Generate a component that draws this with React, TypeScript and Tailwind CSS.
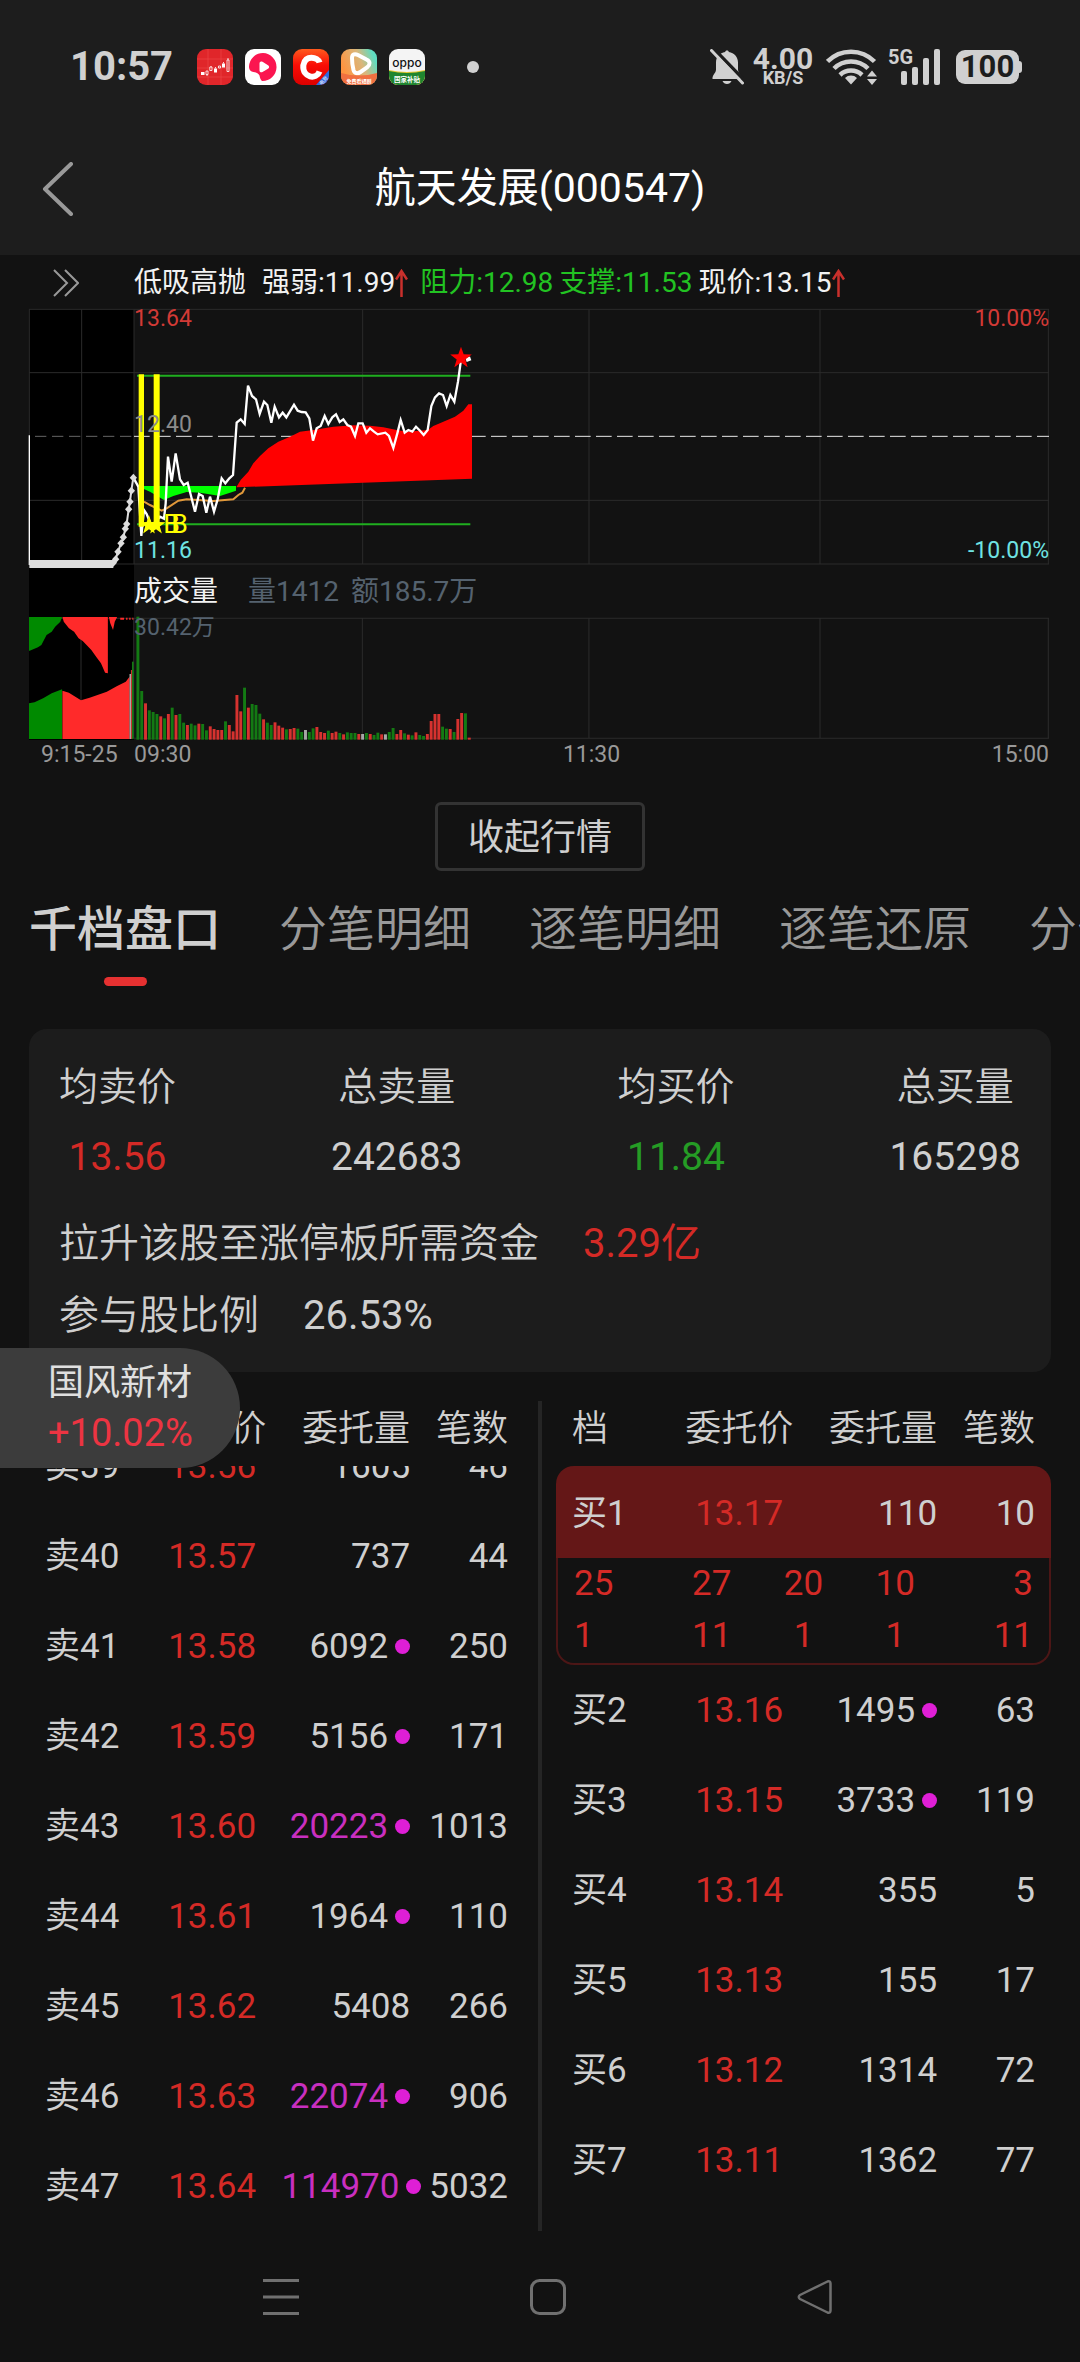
import { useState } from "react";

type Order = { level: string; price: string; volume: string; count: string; dot?: boolean; big?: boolean };

const SELLS: Order[] = [
  { level: "卖39", price: "13.56", volume: "1605", count: "46" },
  { level: "卖40", price: "13.57", volume: "737", count: "44" },
  { level: "卖41", price: "13.58", volume: "6092", count: "250", dot: true },
  { level: "卖42", price: "13.59", volume: "5156", count: "171", dot: true },
  { level: "卖43", price: "13.60", volume: "20223", count: "1013", dot: true, big: true },
  { level: "卖44", price: "13.61", volume: "1964", count: "110", dot: true },
  { level: "卖45", price: "13.62", volume: "5408", count: "266" },
  { level: "卖46", price: "13.63", volume: "22074", count: "906", dot: true, big: true },
  { level: "卖47", price: "13.64", volume: "114970", count: "5032", dot: true, big: true },
];

const BUYS: Order[] = [
  { level: "买2", price: "13.16", volume: "1495", count: "63", dot: true },
  { level: "买3", price: "13.15", volume: "3733", count: "119", dot: true },
  { level: "买4", price: "13.14", volume: "355", count: "5" },
  { level: "买5", price: "13.13", volume: "155", count: "17" },
  { level: "买6", price: "13.12", volume: "1314", count: "72" },
  { level: "买7", price: "13.11", volume: "1362", count: "77" },
];

const BUY_ONE: Order = { level: "买1", price: "13.17", volume: "110", count: "10" };
const BUY_ONE_QUEUE = ["25", "27", "20", "10", "3", "1", "11", "1", "1", "11"];

const TABS = ["千档盘口", "分笔明细", "逐笔明细", "逐笔还原", "分价表"];

const STATS = [
  { label: "均卖价", value: "13.56", color: "text-[#d42a26]" },
  { label: "总卖量", value: "242683", color: "text-[#cfcfcf]" },
  { label: "均买价", value: "11.84", color: "text-[#259c25]" },
  { label: "总买量", value: "165298", color: "text-[#cfcfcf]" },
];

const PRICE_LINE =
  "400,683 415,710 424,858 432,780 440,792 455,830 480,800 492,806 497,760 504,620 515,695 527,610 540,688 551,705 563,698 585,785 597,732 608,738 619,788 630,740 642,785 653,748 665,685 676,700 688,685 699,675 710,518 722,508 734,522 744,407 756,438 768,448 779,492 792,455 802,465 814,518 824,470 837,502 848,488 859,502 882,464 893,482 905,486 917,487 928,505 939,572 950,535 962,528 974,498 985,522 997,502 1008,493 1019,516 1030,508 1042,525 1053,530 1065,558 1075,520 1088,520 1099,548 1110,535 1122,545 1133,553 1156,548 1167,558 1180,594 1192,550 1202,510 1214,548 1225,540 1237,545 1248,530 1260,542 1271,555 1283,540 1294,468 1305,442 1317,430 1329,435 1340,468 1351,435 1363,455 1374,395 1384,322";

const AUCTION = [
  [340, 938], [347, 928], [354, 905], [363, 880], [370, 862], [376, 836], [380, 822], [386, 778], [390, 755], [394, 722], [400, 683],
];

// minute volume bars: colour letter (g/r/w) + top of the bar
const VOLUME =
  "g140 g363 r400 g421 g426 g432 r439 g445 r432 g413 r435 g432 g458 r465 g461 g466 r461 g462 g481 r469 r477 r480 r480 g454 r465 r484 r375 r424 g353 r413 g402 g405 g431 r448 g458 g465 r457 r467 r473 g478 r477 r474 g476 g486 w480 g486 g475 r471 r486 r489 g482 r489 r485 g489 r493 g487 g489 g489 r492 w492 g489 r492 g495 g488 r493 w493 g486 g474 r492 r480 g490 r494 g496 r487 g495 g498 r492 r453 r432 r432 g470 g476 r477 g486 r447 r429 g430 r503".split(" ");

const BAR_COLORS: Record<string, string> = { g: "#137a13", r: "#d6322f", w: "#a8a8a8" };

function starPoints(cx: number, cy: number, r: number) {
  return Array.from({ length: 10 }, (_, i) => {
    const rad = i % 2 ? r * 0.4 : r;
    const a = (Math.PI / 5) * i - Math.PI / 2;
    return `${cx + rad * Math.cos(a)},${cy + rad * Math.sin(a)}`;
  }).join(" ");
}

function AppIcons() {
  return (
    <div className="flex gap-3">
      <svg width="36" height="36" viewBox="0 0 36 36">
        <rect width="36" height="36" rx="9" fill="#e0262a" />
        <path d="M0 10H36M0 19H36M0 28H36M11 0V36M24 0V36" stroke="#ee4a4a" strokeWidth="0.6" />
        <path d="M4 23h3.500v3h-3.500zM17 19.500h3v4h-3zM25 14.500h3v4h-3z" fill="#fff" />
        <path d="M9 22h2v3.500h-2zM10 25.500v1.500M12.800 18h2.200v3.500h-2.200zM14 17v1M21.500 17h2v2h-2zM30 11h2v11.500h-2zM31 9v2M18.500 18v1.500M26.500 13v1.500" fill="none" stroke="#fff" strokeWidth="0.8" />
      </svg>
      <svg width="36" height="36" viewBox="0 0 36 36">
        <rect width="36" height="36" rx="9" fill="#fff" />
        <path d="M18 4a14 14 0 1 1-1 28c-1.500-1-2-3-2.500-5.500-1-2-3-3-6-3.500-2.500-.5-4.500-2-4.500-5.500A14 14 0 0 1 18 4z" fill="#fb1550" />
        <path d="M14.500 14.500c0-2 1.500-2.500 3-1.700l5.500 3.500c1.500 1 1.500 2.500 0 3.400l-5.500 3.300c-1.500.8-3 .2-3-1.500z" fill="#fff" />
      </svg>
      <svg width="36" height="36" viewBox="0 0 36 36">
        <defs>
          <linearGradient id="c-red" x1="0" y1="0" x2="0" y2="1">
            <stop offset="0" stopColor="#ff5a1e" />
            <stop offset="0.45" stopColor="#f90d05" />
            <stop offset="1" stopColor="#dc0000" />
          </linearGradient>
          <clipPath id="c-clip"><rect width="36" height="36" rx="9" /></clipPath>
        </defs>
        <g clipPath="url(#c-clip)">
          <rect width="36" height="36" fill="url(#c-red)" />
          <path d="M26.500 13.500C25 8 12 5 10.300 16.500 9.500 29 23.500 31 26.500 22.500" fill="none" stroke="#fff" strokeWidth="6" />
          <path d="M36 21V36H23z" fill="#2d6be0" />
          <text x="26" y="35" fontSize="5" fill="#fff" transform="rotate(-48 29 33)">电竞</text>
        </g>
      </svg>
      <svg width="36" height="36" viewBox="0 0 36 36">
        <defs>
          <linearGradient id="v-bg" x1="0" y1="0.4" x2="1" y2="0">
            <stop offset="0" stopColor="#ff9440" />
            <stop offset="0.5" stopColor="#d9b77c" />
            <stop offset="0.85" stopColor="#5fdcc0" />
          </linearGradient>
          <clipPath id="v-clip"><rect width="36" height="36" rx="9" /></clipPath>
        </defs>
        <g clipPath="url(#v-clip)">
          <rect width="36" height="36" fill="url(#v-bg)" />
          <path d="M11 9c0-4 3-4.500 6-3l8.500 4.500c4 2 4 5 .5 8l-6.500 4.500c-3 2-6 1.500-7-2-1-4-1.500-8-1.500-12z" fill="none" stroke="#fff" strokeWidth="4" />
          <path d="M0 24q18 5 36 0V36H0z" fill="#f07040" />
          <text x="18" y="34" fontSize="5" fontWeight="700" textAnchor="middle" fill="#fff">免费看短剧</text>
        </g>
      </svg>
      <svg width="36" height="36" viewBox="0 0 36 36">
        <clipPath id="o-clip"><rect width="36" height="36" rx="9" /></clipPath>
        <g clipPath="url(#o-clip)">
          <rect width="36" height="36" fill="#f4f4f4" />
          <path d="M0 21q18 4 36 0V36H0z" fill="#e8c832" />
          <path d="M0 22q18 4 36 0V36H0z" fill="#20852f" />
          <text x="18" y="18" fontSize="12" fontFamily="Inter" fontWeight="500" textAnchor="middle" fill="#111">oppo</text>
          <text x="18" y="32.500" fontSize="6.500" fontWeight="700" textAnchor="middle" fill="#fff">国家补贴</text>
        </g>
      </svg>
    </div>
  );
}

function StatusBar() {
  return (
    <div className="flex h-[122px] items-center justify-between pt-3 pl-[70px] pr-[58px] text-[#d0d0d0]">
      <div className="flex items-center gap-6">
        <span className="text-[40px] font-bold leading-none">10:57</span>
        <AppIcons />
        <span className="ml-[18px] h-3 w-3 rounded-full bg-[#d0d0d0]" />
      </div>
      <div className="flex items-center">
        <svg width="34" height="36" viewBox="0 0 34 36" fill="#d0d0d0">
          <path d="M17 1.500c1.200 0 1.800.6 1.800 1.600 5.500 1 9.200 5 9.200 10.400v7.500c0 2.500 3.500 5 3.500 7.500v1.500H2.500V28.500C2.500 26 6 23.500 6 21V13.500C6 8 9.700 4 15.200 3.100c0-1 .6-1.600 1.800-1.600zM12.500 32h9c-.8 2-2.500 3-4.500 3s-3.700-1-4.500-3z" />
          <path d="M3 -1L35 32" stroke="#1d1d1d" strokeWidth="3.500" />
          <path d="M1.500 1.500L32.500 34" stroke="#d0d0d0" strokeWidth="3" strokeLinecap="round" />
        </svg>
        <div className="ml-2 flex w-[62px] flex-col items-center font-bold">
          <span className="text-[30px] leading-[22px]">4.00</span>
          <span className="text-[18px] leading-[16px]">KB/S</span>
        </div>
        <svg className="ml-3" width="52" height="36" viewBox="0 0 52 36" fill="none" stroke="#d0d0d0" strokeWidth="4.500">
          <path d="M1.500 12.500a33 33 0 0 1 47 0M8 19.500a24 24 0 0 1 34 0M14 26a16 16 0 0 1 22 0" />
          <path d="M25 35.500l-6-6.500a8.500 8.500 0 0 1 12 0zM46 21.500l5 6H41zM46 36l-5-6H51z" fill="#d0d0d0" stroke="none" />
        </svg>
        <div className="relative ml-[14px]">
          <svg width="48" height="36" viewBox="0 0 48 36" fill="#d0d0d0">
            <rect x="9" y="22" width="6" height="14" rx="2" />
            <rect x="20" y="18" width="6" height="18" rx="2" />
            <rect x="31" y="9" width="6" height="27" rx="2" />
            <rect x="42" y="0" width="6" height="36" rx="2" />
          </svg>
          <span className="absolute -left-1 -top-px text-[20px] font-bold leading-[18px]">5G</span>
        </div>
        <div className="ml-4 flex items-center">
          <span className="flex h-[34px] w-[63px] items-center justify-center rounded-[9px] bg-[#d0d0d0] text-[31px] font-bold text-[#1d1d1d]">100</span>
          <span className="h-3 w-[3px] rounded-r-full bg-[#d0d0d0]" />
        </div>
      </div>
    </div>
  );
}

function UpArrow() {
  return (
    <svg className="inline-block" width="13" height="28" viewBox="0 0 13 28" fill="none" stroke="#c9302c" strokeWidth="2.500">
      <path d="M6.500 28V2M1 10.500L6.500 2L12 10.500" />
    </svg>
  );
}

function PriceChart() {
  return (
    <div className="relative">
      <svg className="block h-[256px] w-full overflow-visible" viewBox="87 177 3060 768" preserveAspectRatio="none">
        <rect x="87" y="177" width="315" height="768" fill="#000" />
        <path d="M87 178H3147M87 368H3147M87 751H3147M87 942H3147M245 178V942M402 178V942M1088 178V942M1767 178V942M2460 178V942M3145 178V942M88 178V942" stroke="#2b2b2b" strokeWidth="3" />
        <path d="M105 559H402" stroke="#666" strokeWidth="3" strokeDasharray="34 17" />
        <path d="M402 559H3147" stroke="#e8e8e8" strokeWidth="3" strokeDasharray="47 16" />
        <path d="M411 377H1411M411 823H1411" stroke="#1fae1f" strokeWidth="6" />
        <path d="M432 755L450 765L485 782L500 775L535 752L560 748L640 753L700 748L715 735L727 728L735 713" fill="none" stroke="#e0983a" strokeWidth="6" />
        <path d="M430 708H708V722L690 728L660 738L600 728L560 726L520 738L492 750L450 725L430 716Z" fill="#00ff00" />
        <path d="M709 712L722 690L745 665L760 640L780 618L805 595L835 575L870 560L900 545L940 540L1000 530L1060 526L1110 527L1150 532L1190 540L1220 545L1283 540L1300 528L1330 515L1365 500L1390 482L1405 463H1416V686Z" fill="#ff0000" />
        <polyline points={PRICE_LINE} fill="none" stroke="#fff" strokeWidth="7" />
        <path d="M1398 330L1412 325" stroke="#fff" strokeWidth="12" />
        <path d="M88 556V945" stroke="#fff" strokeWidth="4" />
        <path d="M88 942H340" stroke="#ddd" strokeWidth="24" />
        <polyline points={AUCTION.map((p) => p.join(",")).join(" ")} fill="none" stroke="#ddd" strokeWidth="6" />
        {AUCTION.map(([x, y]) => (
          <path key={y} d={`M${x - 11} ${y}L${x} ${y - 12}L${x + 11} ${y}L${x} ${y + 12}Z`} fill="#ddd" />
        ))}
        <path d="M416 373H432V830H416ZM461 373H479V830H461Z" fill="#ffff00" />
        <polygon points={starPoints(447, 826, 30)} fill="#ffff00" />
        <polygon points={starPoints(468, 826, 30)} fill="#ffff00" />
        <text x="490" y="850" fontSize="80" fill="#ffff00">B</text>
        <text x="514" y="850" fontSize="80" fill="#ffff00">B</text>
        <polygon points={starPoints(1383, 324, 34)} fill="#ff0000" />
      </svg>
      <div className="absolute inset-y-0 left-[10.3%] right-0 flex flex-col justify-between text-[23px] leading-5">
        <div className="flex justify-between text-[#d23a36]">
          <span>13.64</span>
          <span>10.00%</span>
        </div>
        <span className="mb-5 text-[#8c8c8c]">12.40</span>
        <div className="mb-1 flex justify-between text-[#6fe3e3]">
          <span>11.16</span>
          <span>-10.00%</span>
        </div>
      </div>
    </div>
  );
}

function VolumeChart() {
  return (
    <div className="relative">
      <svg className="block h-[122px] w-full overflow-visible" viewBox="84 144 2962 366" preserveAspectRatio="none">
        <rect x="84" y="144" width="305" height="366" fill="#000" />
        <path d="M84 145H3046M389 505H3046M235 145V505M388 145V505M1052 145V505M1710 145V505M2381 145V505M3044 145V505" stroke="#2b2b2b" strokeWidth="3" />
        <path d="M84 141H180L175 155L160 170L150 185L135 195L120 225L110 232L86 242H84ZM84 400L100 397L125 385L150 370L180 358V507H84Z" fill="#008a00" />
        <path d="M181 141H313V310L305 308L293 280L280 262L265 240L240 213L228 205L215 185L200 175L185 155ZM316 141H340L333 155L328 180L320 160ZM349 143H360V149H349ZM366 143H370V149H366ZM375 143H379V149H375ZM384 143H387V149H384Z" fill="#ff2a2a" />
        <path d="M181 362L200 368L215 378L235 391L260 383L310 365L340 348L365 335L376 320V507H181Z" fill="#ff2a2a" />
        <path d="M376 312H380V507H376Z" fill="#bbb" />
        <path d="M380 300H383V507H380Z" fill="#d6322f" />
        <path d="M383 275H388V507H383Z" fill="#137a13" />
        {VOLUME.map((v, i) => {
          const top = Number(v.slice(1));
          return <rect key={i} x={396 + i * 11.06} y={top} width="8.500" height={509 - top} fill={BAR_COLORS[v[0]]} />;
        })}
      </svg>
      <span className="absolute left-[10.3%] top-0 text-[23px] leading-5 text-[#55626f]">30.42万</span>
    </div>
  );
}

function Quote() {
  return (
    <section className="pl-[29px] pr-[31px]">
      <div className="flex h-[54px] items-center whitespace-nowrap pt-0.5 text-[28px] text-[#f2f2f2]">
        <div className="w-[10.3%] shrink-0 pl-6">
          <svg width="26" height="28" viewBox="0 0 26 28" fill="none" stroke="#999" strokeWidth="2">
            <path d="M1 1L14 14L1 27M12 1L25 14L12 27" />
          </svg>
        </div>
        <span className="mr-4">低吸高抛</span>
        <span className="mr-3 flex items-center">强弱:11.99<UpArrow /></span>
        <span className="mr-1.5 text-[#22c322]">阻力:12.98</span>
        <span className="mr-1.5 text-[#22c322]">支撑:11.53</span>
        <span className="flex items-center">现价:13.15<UpArrow /></span>
      </div>
      <PriceChart />
      <div className="flex h-[53px] items-center text-[28px] text-[#55626f]">
        <div className="h-full w-[10.3%] bg-black" />
        <span className="mr-[30px] text-[#f2f2f2]">成交量</span>
        <span className="mr-3">量1412</span>
        <span>额185.7万</span>
      </div>
      <VolumeChart />
      <div className="flex h-7 items-center pt-0.5 text-[23px] text-[#999]">
        <span className="w-[10.3%] whitespace-nowrap pl-3">9:15-25</span>
        <div className="grid flex-1 grid-cols-3">
          <span>09:30</span>
          <span className="text-center">11:30</span>
          <span className="text-right">15:00</span>
        </div>
      </div>
    </section>
  );
}

function HeadRow() {
  return (
    <tr className="h-[65px] text-[36px] leading-none">
      <th className="w-[23%] pb-2.5 pl-4 text-left font-[350]">档</th>
      <th className="w-[28%] pb-2.5 font-[350]">委托价</th>
      <th className="w-[26%] whitespace-nowrap pb-2.5 text-right font-[350]">委托量</th>
      <th className="w-[23%] pb-2.5 pr-4 text-right font-[350]">笔数</th>
    </tr>
  );
}

function OrderCells({ order, first, last }: { order: Order; first?: string; last?: string }) {
  return (
    <>
      <td className={`w-[23%] pl-4 ${first ?? ""}`}>{order.level}</td>
      <td className="w-[28%] text-center text-[#d42a26]">{order.price}</td>
      <td className="w-[26%]">
        <div className={`flex items-center justify-end-safe ${order.big ? "text-[#c92fc0]" : ""}`}>
          {order.volume}
          {order.dot && <span className="ml-[7px] h-[15px] w-[15px] shrink-0 rounded-full bg-[#df1fd6]" />}
        </div>
      </td>
      <td className={`w-[23%] pr-4 text-right ${last ?? ""}`}>{order.count}</td>
    </>
  );
}

function SellBook() {
  return (
    <div className="min-w-0 flex-1">
      <table className="w-full table-fixed border-separate border-spacing-0">
        <thead><HeadRow /></thead>
      </table>
      {/* list is scrolled half a row */}
      <div className="overflow-hidden">
        <table className="-mt-[45px] w-full table-fixed border-separate border-spacing-0 text-[35px] leading-none">
          <tbody>
            {SELLS.map((o) => (
              <tr key={o.level} className="h-[90px]"><OrderCells order={o} /></tr>
            ))}
          </tbody>
        </table>
      </div>
    </div>
  );
}

function BuyBook() {
  return (
    <div className="min-w-0 flex-1">
      <table className="w-full table-fixed border-separate border-spacing-0 text-[35px] leading-none">
        <thead><HeadRow /></thead>
        <tbody>
          <tr className="h-[92px] [&>td]:bg-[#641717] [&>td]:pt-0.5">
            <OrderCells order={BUY_ONE} first="rounded-tl-[18px]" last="rounded-tr-[18px]" />
          </tr>
          <tr>
            <td colSpan={4} className="rounded-b-[18px] border-x-2 border-b-2 border-[#4c1616] px-4 pb-px">
              <div className="grid grid-cols-5 text-center leading-[52px] text-[#d42a26]">
                {BUY_ONE_QUEUE.map((n, i) => (
                  <span key={i} className={i % 5 === 0 ? "text-left" : i % 5 === 4 ? "text-right" : ""}>{n}</span>
                ))}
              </div>
            </td>
          </tr>
          {BUYS.map((o) => (
            <tr key={o.level} className="h-[90px]"><OrderCells order={o} /></tr>
          ))}
        </tbody>
      </table>
    </div>
  );
}

export default function App() {
  const [tab, setTab] = useState(0);

  return (
    <div className="relative min-h-screen overflow-hidden bg-[#121212] font-[Roboto,'Noto_Sans_CJK_SC',sans-serif] text-[#cfcfcf]">
      <header className="bg-[#1d1d1d]">
        <StatusBar />
        <div className="grid h-[133px] grid-cols-[1fr_auto_1fr] items-center">
          <button aria-label="返回" className="pl-[42px]">
            <svg width="32" height="54" viewBox="0 0 32 54" fill="none" stroke="#999" strokeWidth="4" strokeLinecap="round" strokeLinejoin="round">
              <path d="M29 2L3 27L29 52" />
            </svg>
          </button>
          <h1 className="text-[41px] text-white">航天发展(000547)</h1>
        </div>
      </header>

      <Quote />

      <div className="mt-[34px] flex justify-center">
        <button className="h-[69px] w-[210px] rounded-md border-[3px] border-[#333] pt-0.5 text-[36px] leading-none">收起行情</button>
      </div>

      <nav className="mt-[27px] flex gap-[58px] overflow-hidden whitespace-nowrap pl-[29px]">
        {TABS.map((t, i) => (
          <button key={t} onClick={() => setTab(i)} className="flex shrink-0 flex-col items-center">
            <span className={`text-[48px] leading-[64px] ${tab === i ? "font-medium" : "font-[350] text-[#999]"}`}>{t}</span>
            <span className={`mt-[15px] h-[9px] w-[43px] rounded-full ${tab === i ? "bg-[#e63131]" : ""}`} />
          </button>
        ))}
      </nav>

      <section className="mx-[29px] mt-[43px] rounded-[18px] bg-[#1c1c1c] px-[30px] pt-[23px] pb-5 text-[39px] font-[350]">
        <div className="mb-4 flex justify-between text-center leading-[70px]">
          {STATS.map((s) => (
            <div key={s.label}>
              <p>{s.label}</p>
              <p className={`font-normal ${s.color}`}>{s.value}</p>
            </div>
          ))}
        </div>
        <p className="flex gap-11 text-[40px] leading-[72px]">
          拉升该股至涨停板所需资金<span className="font-normal text-[#d42a26]">3.29亿</span>
        </p>
        <p className="flex gap-11 text-[40px] leading-[72px]">
          参与股比例<span className="font-normal">26.53%</span>
        </p>
      </section>

      <section className="mx-[29px] mt-[29px] flex">
        <SellBook />
        <div className="mx-[14px] w-[4px] bg-[#252525]" />
        <BuyBook />
      </section>

      <a href="#quote" className="absolute left-0 top-[1348px] flex h-[120px] w-[240px] flex-col justify-center rounded-r-full bg-[#3c3c3c] pl-12 text-[36px] leading-[50px]">
        <span className="text-[#e0e0e0]">国风新材</span>
        <span className="text-[38px] text-[#ec3442]">+10.02%</span>
      </a>

      <footer className="flex h-[131px] items-center justify-center gap-[231px] pl-4">
        <button aria-label="最近任务">
          <svg width="36" height="36" viewBox="0 0 36 36" stroke="#707070" strokeWidth="3"><path d="M0 1.500H36M0 18H36M0 34.500H36" /></svg>
        </button>
        <button aria-label="主页">
          <svg width="36" height="36" viewBox="0 0 36 36" fill="none" stroke="#707070" strokeWidth="3"><rect x="1.500" y="1.500" width="33" height="33" rx="8" /></svg>
        </button>
        <button aria-label="后退">
          <svg width="36" height="36" viewBox="0 0 36 36" fill="none" stroke="#707070" strokeWidth="2.500" strokeLinejoin="round">
            <path d="M30.500 2.500Q33.500 1.500 33.500 4.500V31.500Q33.500 34.500 30.500 33.500L3 20Q0.500 18 3 16Z" />
          </svg>
        </button>
      </footer>
    </div>
  );
}
